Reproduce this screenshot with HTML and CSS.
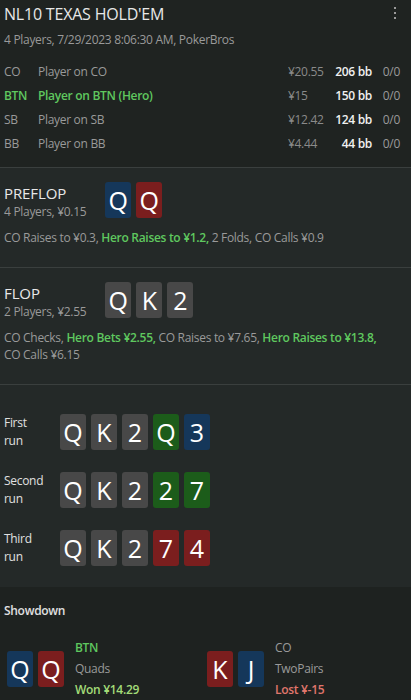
FILE: index.html
```html
<!DOCTYPE html>
<html>
<head>
  <title>Hand History</title>
  <link rel="stylesheet" href="styles.css">
</head>
<body>
  <div class="header">
    <div class="title-row">
      <div class="title">NL10 TEXAS HOLD'EM</div>
      <svg class="menu" width="4" height="14" viewBox="0 0 4 14">
        <rect x="1" y="1" width="2" height="2" fill="#9a9a9a"/>
        <rect x="1" y="6" width="2" height="2" fill="#9a9a9a"/>
        <rect x="1" y="11" width="2" height="2" fill="#9a9a9a"/>
      </svg>
    </div>
    <div class="subtitle">4 Players, 7/29/2023 8:06:30 AM, PokerBros</div>

    <div class="players">
      <div class="player">
        <span class="pos">CO</span>
        <span class="name">Player on CO</span>
        <span class="stack">¥20.55</span>
        <span class="bb">206 bb</span>
        <span class="ratio">0/0</span>
      </div>
      <div class="player hero">
        <span class="pos">BTN</span>
        <span class="name">Player on BTN (Hero)</span>
        <span class="stack">¥15</span>
        <span class="bb">150 bb</span>
        <span class="ratio">0/0</span>
      </div>
      <div class="player">
        <span class="pos">SB</span>
        <span class="name">Player on SB</span>
        <span class="stack">¥12.42</span>
        <span class="bb">124 bb</span>
        <span class="ratio">0/0</span>
      </div>
      <div class="player">
        <span class="pos">BB</span>
        <span class="name">Player on BB</span>
        <span class="stack">¥4.44</span>
        <span class="bb">44 bb</span>
        <span class="ratio">0/0</span>
      </div>
    </div>
  </div>

  <div class="street preflop">
    <div class="street-head">
      <div class="street-info">
        <div class="street-name">PREFLOP</div>
        <div class="street-sub">4 Players, ¥0.15</div>
      </div>
      <div class="cards">
        <div class="card blue">Q</div>
        <div class="card red">Q</div>
      </div>
    </div>
    <div class="actions">CO Raises to ¥0.3, <b>Hero Raises to ¥1.2,</b> 2 Folds, CO Calls ¥0.9</div>
  </div>

  <div class="street flop">
    <div class="street-head">
      <div class="street-info">
        <div class="street-name">FLOP</div>
        <div class="street-sub">2 Players, ¥2.55</div>
      </div>
      <div class="cards">
        <div class="card gray">Q</div>
        <div class="card gray">K</div>
        <div class="card gray">2</div>
      </div>
    </div>
    <div class="actions">CO Checks, <b>Hero Bets ¥2.55,</b> CO Raises to ¥7.65, <b>Hero Raises to ¥13.8,</b><br>CO Calls ¥6.15</div>
  </div>

  <div class="runs">
    <div class="run">
      <div class="run-label">First<br>run</div>
      <div class="cards">
        <div class="card gray">Q</div>
        <div class="card gray">K</div>
        <div class="card gray">2</div>
        <div class="card green">Q</div>
        <div class="card blue">3</div>
      </div>
    </div>
    <div class="run">
      <div class="run-label">Second<br>run</div>
      <div class="cards">
        <div class="card gray">Q</div>
        <div class="card gray">K</div>
        <div class="card gray">2</div>
        <div class="card green">2</div>
        <div class="card green">7</div>
      </div>
    </div>
    <div class="run">
      <div class="run-label">Third<br>run</div>
      <div class="cards">
        <div class="card gray">Q</div>
        <div class="card gray">K</div>
        <div class="card gray">2</div>
        <div class="card red">7</div>
        <div class="card red">4</div>
      </div>
    </div>
  </div>

  <div class="showdown">
    <div class="showdown-title">Showdown</div>
    <div class="hands">
      <div class="hand">
        <div class="cards">
          <div class="card blue">Q</div>
          <div class="card red">Q</div>
        </div>
        <div class="hand-info">
          <div class="hand-pos win">BTN</div>
          <div class="hand-rank">Quads</div>
          <div class="result won">Won ¥14.29</div>
        </div>
      </div>
      <div class="hand">
        <div class="cards">
          <div class="card red">K</div>
          <div class="card blue">J</div>
        </div>
        <div class="hand-info">
          <div class="hand-pos">CO</div>
          <div class="hand-rank">TwoPairs</div>
          <div class="result lost">Lost ¥-15</div>
        </div>
      </div>
    </div>
  </div>
</body>
</html>
```

FILE: styles.css
```css
body {
  margin: 0;
  background-color: #242928;
  font-family: "Open Sans", "Noto Sans", sans-serif;
  color: #9a9a9a;
  font-size: 12px;
  letter-spacing: -0.3px;
}

.header {
  background-color: #1f2321;
  padding: 2px 4px 12px 4px;
  border-bottom: 1px solid #3a3f3e;
}

.title-row {
  display: flex;
  justify-content: space-between;
}

.title {
  font-size: 16px;
  letter-spacing: -0.2px;
  color: #e8e8e8;
  line-height: 24px;
}

.menu {
  margin-right: 10px;
  margin-top: 4px;
}

.subtitle {
  margin-top: 5px;
  line-height: 18px;
}

.players {
  margin-top: 10px;
}

.player {
  display: flex;
  align-items: center;
  height: 24px;
}

.player .pos {
  width: 34px;
}

.player .name {
  flex: 1;
}

.player .stack {
  width: 40px;
  color: #8a8a8a;
}

.player .bb {
  width: 44px;
  text-align: right;
  color: #f0f0f0;
  font-weight: 600;
}

.player .ratio {
  width: 28px;
  text-align: right;
  margin-right: 7px;
}

.player.hero .pos,
.player.hero .name {
  color: #5fc85f;
  font-weight: 600;
}

.street {
  padding: 14px 4px 21px 4px;
  border-bottom: 1px solid #3a3f3e;
}

.street-head {
  display: flex;
  align-items: flex-start;
  gap: 19px;
}

.street-info {
  margin-top: 1px;
}

.street-name {
  font-size: 15px;
  letter-spacing: -0.1px;
  color: #e8e8e8;
  line-height: 20px;
}

.street-sub {
  line-height: 18px;
}

.actions {
  margin-top: 8px;
  line-height: 17px;
}

.actions b {
  color: #5fc85f;
  font-weight: 600;
}

.cards {
  display: flex;
  gap: 5px;
}

.card {
  width: 26px;
  height: 36px;
  border-radius: 3px;
  color: #fff;
  font-size: 25px;
  letter-spacing: 0;
  line-height: 36px;
  text-align: center;
}

.card.blue {
  background-color: #15375a;
}

.card.red {
  background-color: #7b1e1e;
}

.card.green {
  background-color: #1c5c1a;
}

.card.gray {
  background-color: #484848;
}

.runs {
  padding: 29px 4px 21px 4px;
  display: flex;
  flex-direction: column;
  gap: 22px;
}

.run {
  display: flex;
  align-items: center;
}

.run-label {
  width: 56px;
  color: #e0e0e0;
  line-height: 18px;
}

.showdown {
  background-color: #1e2220;
  padding: 14px 4px 0 4px;
  height: 100px;
}

.showdown-title {
  color: #e0e0e0;
  font-weight: 600;
  line-height: 20px;
}

.hands {
  display: flex;
  margin-top: 16px;
}

.hand {
  display: flex;
  align-items: center;
  gap: 11px;
  width: 212px;
}

.hands .hand:first-child {
  padding-left: 3px;
}

.hand-info div {
  line-height: 21px;
}

.hand-pos.win {
  color: #5fc85f;
  font-weight: 600;
}

.result {
  font-weight: 600;
}

.result.won {
  color: #a3dc78;
}

.result.lost {
  color: #e0766c;
}
```
